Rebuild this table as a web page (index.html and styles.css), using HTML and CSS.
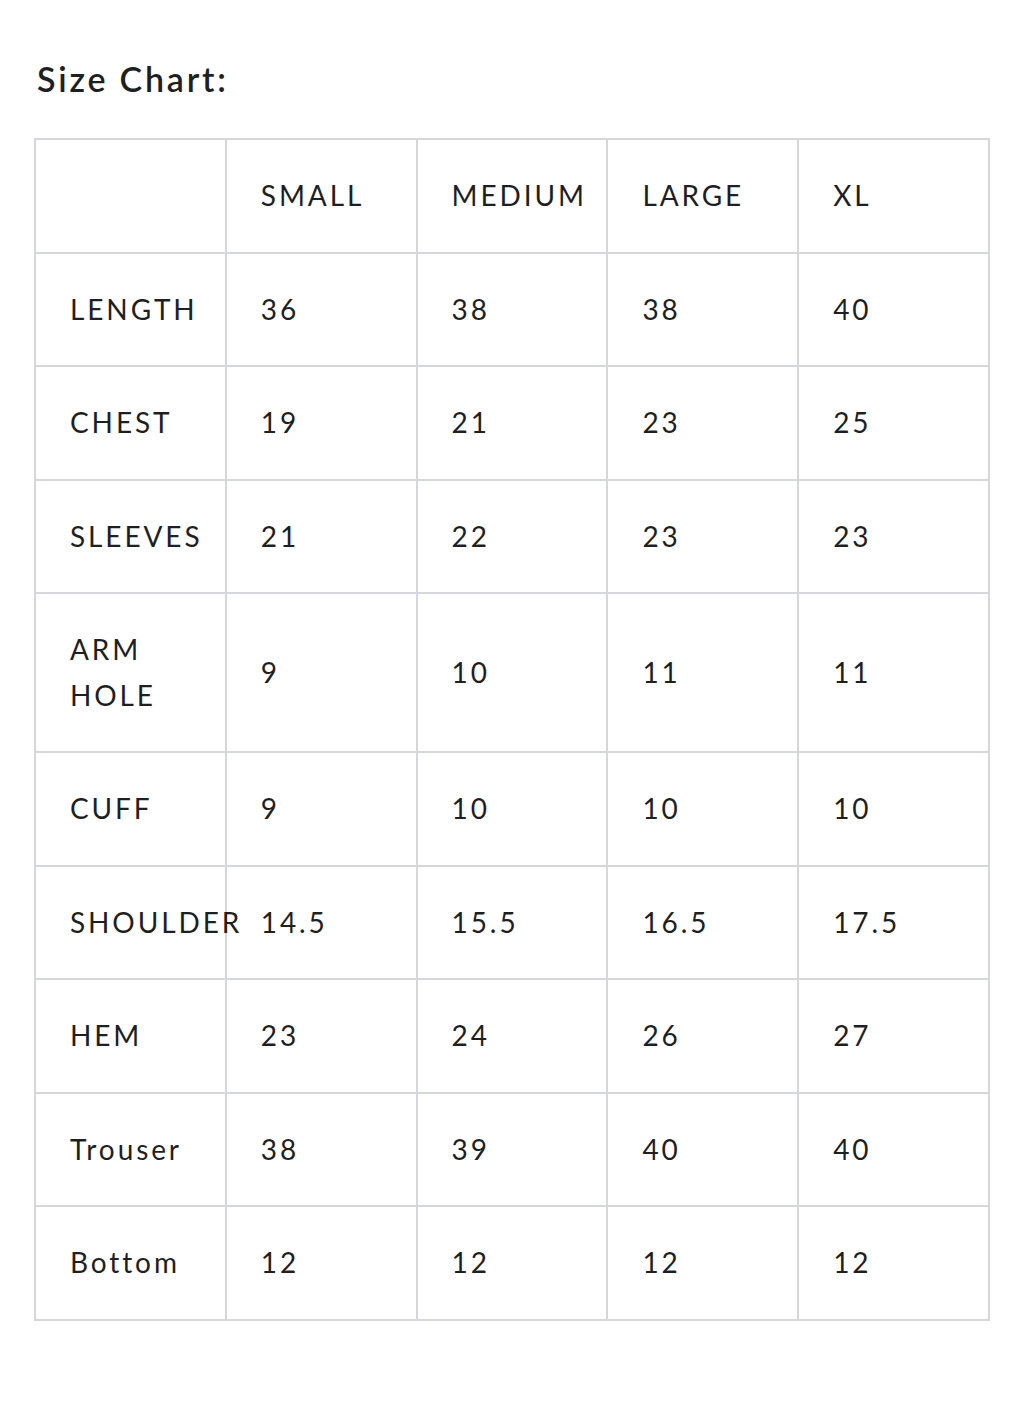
FILE: index.html
```html
<!DOCTYPE html>
<html lang="en">
<head>
<meta charset="utf-8">
<title>Size Chart</title>
<link rel="stylesheet" href="styles.css">
</head>
<body>
<main class="page">
  <h2 class="title">Size Chart:</h2>
  <table class="chart">
    <tbody>
      <tr><td></td><td>SMALL</td><td>MEDIUM</td><td>LARGE</td><td>XL</td></tr>
      <tr><td>LENGTH</td><td>36</td><td>38</td><td>38</td><td>40</td></tr>
      <tr><td>CHEST</td><td>19</td><td>21</td><td>23</td><td>25</td></tr>
      <tr><td>SLEEVES</td><td>21</td><td>22</td><td>23</td><td>23</td></tr>
      <tr><td>ARM<br>HOLE</td><td>9</td><td>10</td><td>11</td><td>11</td></tr>
      <tr><td>CUFF</td><td>9</td><td>10</td><td>10</td><td>10</td></tr>
      <tr><td class="nowrap">SHOULDER</td><td>14.5</td><td>15.5</td><td>16.5</td><td>17.5</td></tr>
      <tr><td>HEM</td><td>23</td><td>24</td><td>26</td><td>27</td></tr>
      <tr><td>Trouser</td><td>38</td><td>39</td><td>40</td><td>40</td></tr>
      <tr><td>Bottom</td><td>12</td><td>12</td><td>12</td><td>12</td></tr>
    </tbody>
  </table>
</main>
</body>
</html>
```
FILE: styles.css
```css
html, body {
  margin: 0;
  padding: 0;
  background: #ffffff;
}
.page {
  padding: 57px 0 0 34px;
  font-family: Lato, "Noto Sans", sans-serif;
  color: #1e1f23;
}
.title {
  margin: 0 0 38px 3px;
  font-size: 34px;
  line-height: 43px;
  font-weight: 600;
  letter-spacing: 2.8px;
}
.chart {
  width: 956px;
  table-layout: fixed;
  border-collapse: collapse;
  border: 2px solid #d6d7dd;
}
.chart td {
  border: 2px solid #d6d7dd;
  padding: 33px 0 33px 34px;
  font-size: 28px;
  line-height: 45.5px;
  letter-spacing: 2.9px;
  white-space: normal;
  vertical-align: middle;
  overflow: visible;
}
.chart td.nowrap {
  white-space: nowrap;
}
```
